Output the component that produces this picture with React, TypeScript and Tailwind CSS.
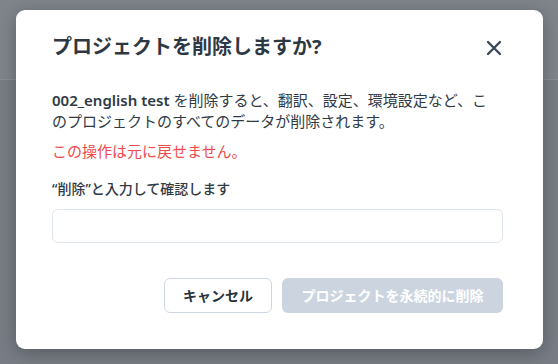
import { useState } from "react";

function CloseIcon() {
  return (
    <svg width="16" height="16" viewBox="0 0 16 16" fill="none">
      <path
        d="M2 2L14 14M14 2L2 14"
        stroke="#374657"
        strokeWidth="2.3"
        strokeLinecap="round"
      />
    </svg>
  );
}

export default function App() {
  const [value, setValue] = useState("");

  return (
    <div
      className="relative w-[558px] h-[364px] overflow-hidden bg-[#787d85]"
      style={{ fontFamily: '"Noto Sans", "Noto Sans CJK JP", sans-serif' }}
    >
      {/* page behind the overlay */}
      <div className="h-[80px] bg-[#7f848b] border-b border-[#8a8f96]" />

      {/* dialog */}
      <div className="absolute inset-0 pt-[10px] pl-[16px]">
        <div className="w-[527px] h-[339px] bg-white rounded-[9px] shadow-[0_4px_18px_rgba(0,0,0,0.28)] pl-[36px] pr-[40px] pt-[23px]">
          <div className="flex items-center justify-between h-[28px]">
            <h2 className="text-[20px] leading-[28px] font-bold text-[#2d3843]">
              プロジェクトを削除しますか?
            </h2>
            <button className="w-[28px] h-[28px] flex items-center justify-center mr-[-5px] mt-[2px]">
              <CloseIcon />
            </button>
          </div>

          <p className="mt-[29px] pr-[6px] text-[15px] leading-[21px] text-[#2f3a45]">
            <span className="font-semibold">002_english test</span> を削除すると、翻訳、設定、環境設定など、このプロジェクトのすべてのデータが削除されます。
          </p>
          <p className="mt-[9px] text-[15px] leading-[21px] text-[#ef4b4b]">
            この操作は元に戻せません。
          </p>

          <label className="block mt-[17px] text-[14px] leading-[20px] font-medium text-[#2f3a45]">
            “削除”と入力して確認します
          </label>
          <input
            value={value}
            onChange={(e) => setValue(e.target.value)}
            className="mt-[10px] w-full h-[34px] rounded-[6px] border border-[#dfe5ec] px-3 text-[14px] outline-none"
          />

          <div className="flex justify-end gap-[10px] mt-[35px]">
            <button className="h-[35px] w-[108px] rounded-[6px] border border-[#cdd6e0] bg-white text-[14px] font-bold text-[#2a333c]">
              キャンセル
            </button>
            <button
              disabled
              className="h-[35px] w-[221px] rounded-[6px] bg-[#ccd5df] text-[14px] font-bold text-white"
            >
              プロジェクトを永続的に削除
            </button>
          </div>
        </div>
      </div>
    </div>
  );
}
